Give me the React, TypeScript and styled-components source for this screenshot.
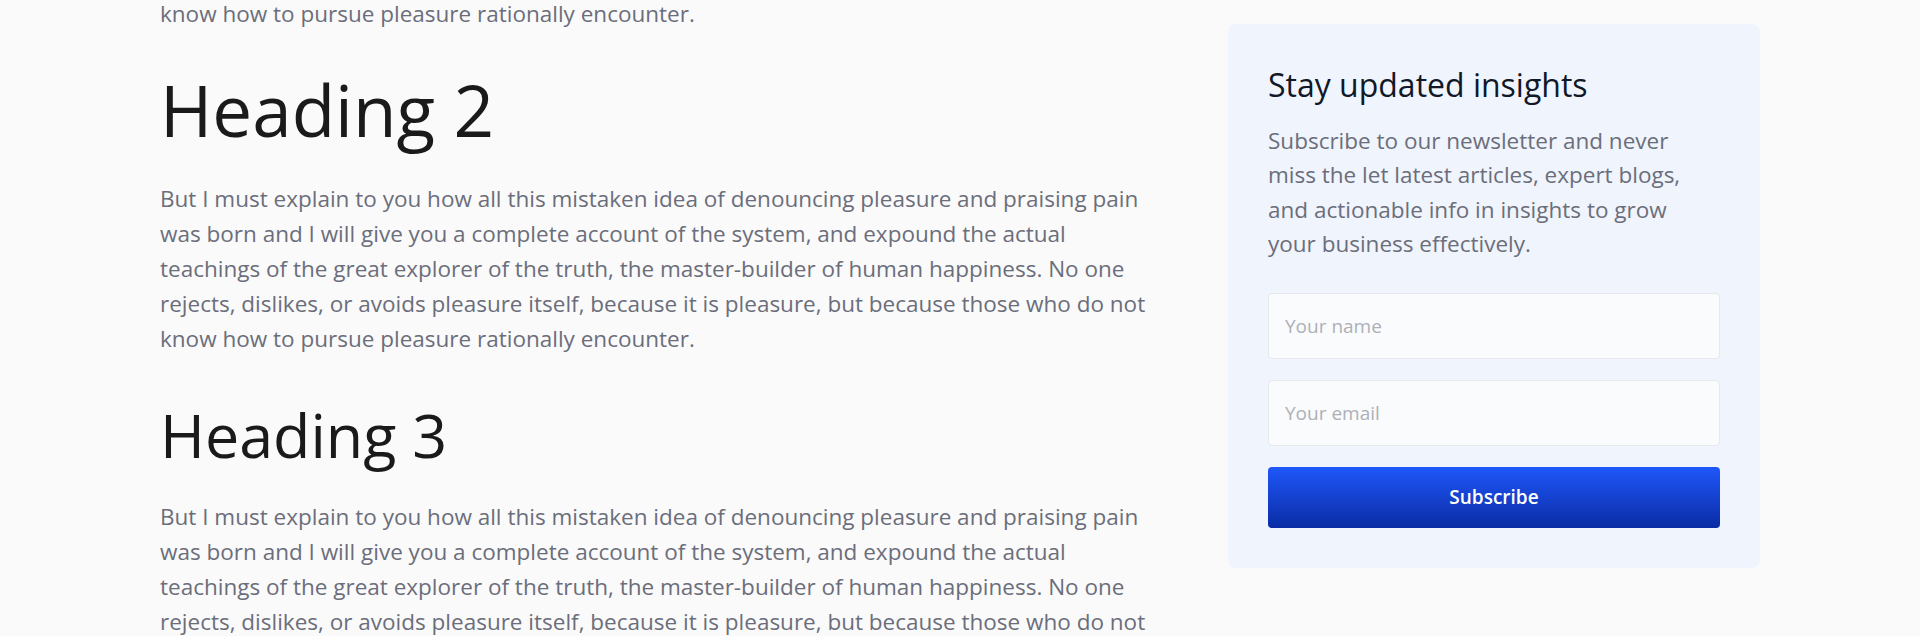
import React from "react";
import styled, { createGlobalStyle } from "styled-components";

const GlobalStyle = createGlobalStyle`
  * {
    box-sizing: border-box;
  }
  body {
    margin: 0;
    background: #fafafa;
    font-family: "Open Sans", "Noto Sans", sans-serif;
  }
`;

const Viewport = styled.div`
  height: 636px;
  overflow: hidden;
`;

const Layout = styled.div`
  width: 1600px;
  margin: 0 auto;
  display: grid;
  grid-template-columns: 1000px 532px;
  justify-content: space-between;
  align-items: start;
`;

// the page is scrolled down: the first paragraph sits above the fold
const Article = styled.article<{ scrollTop: number }>`
  margin-top: ${({ scrollTop }) => -scrollTop}px;
`;

const Heading = styled.h2<{ size: number; top: number; bottom: number }>`
  margin: ${({ top, bottom }) => `${top}px 0 ${bottom}px`};
  font-size: ${({ size }) => size}px;
  line-height: 1.2;
  font-weight: 400;
  color: #1a1a1a;
`;

const Paragraph = styled.p`
  margin: 0;
  font-size: 22.5px;
  line-height: 35px;
  color: #6b6e7a;
`;

const Sidebar = styled.aside`
  margin-top: 24px;
  padding: 40px;
  background: #f0f4fd;
  border-radius: 8px;
`;

const SidebarTitle = styled.h3`
  margin: 0;
  font-size: 32px;
  line-height: 1.3;
  font-weight: 500;
  color: #111827;
`;

const SidebarText = styled.p`
  margin: 18px 0 0;
  max-width: 425px;
  font-size: 22.5px;
  line-height: 34.5px;
  color: #6b6e7a;
`;

const Form = styled.form`
  margin-top: 31px;
  display: flex;
  flex-direction: column;
  gap: 21px;
`;

const Input = styled.input`
  height: 66px;
  padding: 0 16px;
  background: #fafbfc;
  border: 1px solid #e6e8ee;
  border-radius: 4px;
  font-family: inherit;
  font-size: 19px;
  color: #1a1a1a;
  outline: none;
  &::placeholder {
    color: #adb0b8;
  }
`;

const Button = styled.button`
  height: 61px;
  border: none;
  border-radius: 4px;
  background: linear-gradient(180deg, #1f57fa 0%, #0a2ca4 100%);
  color: #fff;
  font-family: inherit;
  font-size: 19px;
  font-weight: 600;
  cursor: pointer;
`;

const body =
  "But I must explain to you how all this mistaken idea of denouncing pleasure and praising pain was born and I will give you a complete account of the system, and expound the actual teachings of the great explorer of the truth, the master-builder of human happiness. No one rejects, dislikes, or avoids pleasure itself, because it is pleasure, but because those who do not know how to pursue pleasure rationally encounter.";

const sections = [
  { title: "Heading 2", size: 71, top: 36, bottom: 29 },
  { title: "Heading 3", size: 61, top: 42, bottom: 28 },
];

export default function App() {
  return (
    <Viewport>
      <GlobalStyle />
      <Layout>
        <Article scrollTop={144}>
          <Paragraph>{body}</Paragraph>
          {sections.map((s) => (
            <section key={s.title}>
              <Heading size={s.size} top={s.top} bottom={s.bottom}>
                {s.title}
              </Heading>
              <Paragraph>{body}</Paragraph>
            </section>
          ))}
        </Article>
        <Sidebar>
          <SidebarTitle>Stay updated insights</SidebarTitle>
          <SidebarText>
            Subscribe to our newsletter and never miss the let latest articles,
            expert blogs, and actionable info in insights to grow your business
            effectively.
          </SidebarText>
          <Form onSubmit={(e) => e.preventDefault()}>
            <Input type="text" placeholder="Your name" />
            <Input type="email" placeholder="Your email" />
            <Button type="submit">Subscribe</Button>
          </Form>
        </Sidebar>
      </Layout>
    </Viewport>
  );
}
